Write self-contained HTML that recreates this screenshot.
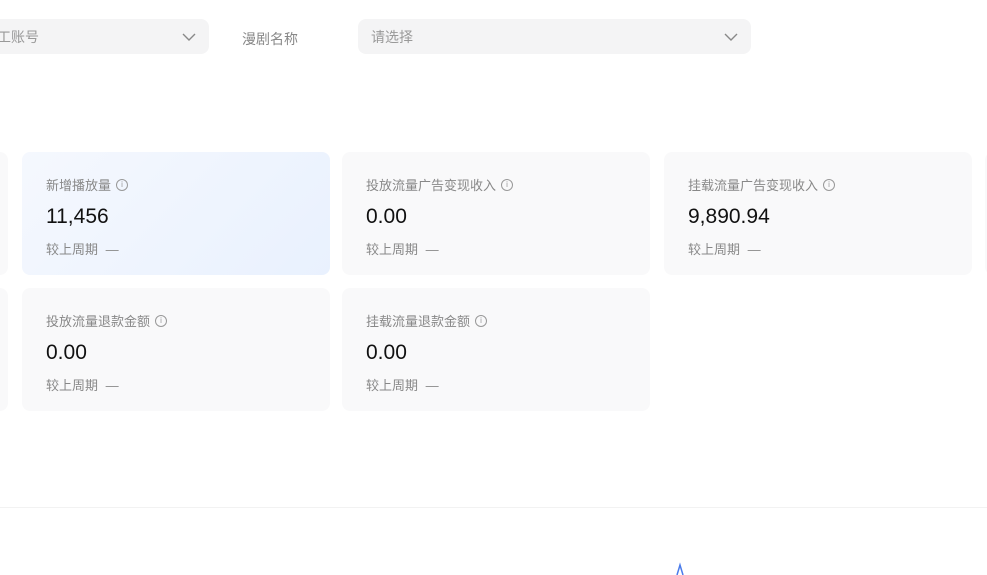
<!DOCTYPE html>
<html><head><meta charset="utf-8"><style>
body{margin:0;width:987px;height:575px;overflow:hidden;background:#fff;font-family:"Liberation Sans","Noto Sans CJK SC",sans-serif;position:relative}
.sel{position:absolute;top:19px;height:35px;background:#f4f4f5;border-radius:8px;font-size:14px;color:#999;line-height:37px}
.sel svg{position:absolute;right:13px;top:13px}
.card{position:absolute;width:308px;height:123px;background:#f9f9fa;border-radius:8px}
.card .t{position:absolute;left:24px;top:23px;font-size:13px;color:#888;display:flex;align-items:center}
.card .t i{display:inline-block;width:10px;height:10px;border:1px solid #999;border-radius:50%;margin-left:5px;position:relative;font-style:normal;font-size:8px;line-height:10px;text-align:center;color:#999}
.card .v{position:absolute;left:24px;top:53px;font-size:21px;color:#111}
.card .c{position:absolute;left:24px;top:87px;font-size:13px;color:#888;word-spacing:4px}
</style></head><body>
<div class="sel" style="left:-20px;width:229px"><span style="padding-left:17px">工账号</span><svg width="14" height="10"><path d="M1 2l6 6 6-6" fill="none" stroke="#888" stroke-width="1.4"/></svg></div>
<div style="position:absolute;left:242px;top:29px;font-size:14px;color:#888">漫剧名称</div>
<div class="sel" style="left:358px;width:393px"><span style="padding-left:13px">请选择</span><svg width="14" height="10"><path d="M1 2l6 6 6-6" fill="none" stroke="#888" stroke-width="1.4"/></svg></div>

<div class="card" style="left:-300px;top:152px"></div>
<div class="card" style="left:22px;top:152px;background:linear-gradient(135deg,#f5f8fe,#e9f1fe)"><div class="t">新增播放量<i>i</i></div><div class="v">11,456</div><div class="c">较上周期 —</div></div>
<div class="card" style="left:342px;top:152px"><div class="t">投放流量广告变现收入<i>i</i></div><div class="v">0.00</div><div class="c">较上周期 —</div></div>
<div class="card" style="left:664px;top:152px"><div class="t">挂载流量广告变现收入<i>i</i></div><div class="v">9,890.94</div><div class="c">较上周期 —</div></div>
<div class="card" style="left:985px;top:152px"></div>

<div class="card" style="left:-300px;top:288px"></div>
<div class="card" style="left:22px;top:288px"><div class="t">投放流量退款金额<i>i</i></div><div class="v">0.00</div><div class="c">较上周期 —</div></div>
<div class="card" style="left:342px;top:288px"><div class="t">挂载流量退款金额<i>i</i></div><div class="v">0.00</div><div class="c">较上周期 —</div></div>

<div style="position:absolute;left:0;top:507px;width:987px;height:1px;background:#f2f2f2"></div>
<svg style="position:absolute;left:674px;top:562px" width="14" height="13"><path d="M3 13L6 3L9 13" fill="none" stroke="#4a7bea" stroke-width="1.5"/></svg>
</body></html>
